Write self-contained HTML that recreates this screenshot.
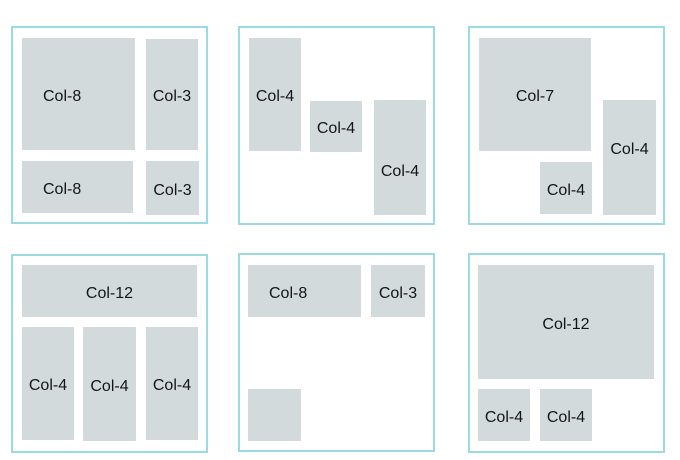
<!DOCTYPE html>
<html><head><style>
body{margin:0;width:680px;height:460px;background:#fff;position:relative;overflow:hidden;font-family:"Liberation Sans",sans-serif}
.p{position:absolute;border:2px solid #9adbe3;box-sizing:border-box}
.b{position:absolute;background:#d2dadc;display:flex;align-items:center;justify-content:center;font-size:16px;color:#151515;box-sizing:border-box;padding-top:5px}
.l{justify-content:flex-start;padding-left:21px}
</style></head><body>
<div class="p" style="left:11px;top:26px;width:197px;height:198px"></div>
<div class="b l" style="left:22px;top:38px;width:113px;height:112px">Col-8</div>
<div class="b" style="left:146px;top:39px;width:52px;height:111px">Col-3</div>
<div class="b l" style="left:22px;top:161px;width:111px;height:52px">Col-8</div>
<div class="b" style="left:146px;top:161px;width:53px;height:54px">Col-3</div>

<div class="p" style="left:238px;top:26px;width:197px;height:199px"></div>
<div class="b" style="left:249px;top:38px;width:52px;height:113px">Col-4</div>
<div class="b" style="left:310px;top:101px;width:52px;height:51px">Col-4</div>
<div class="b" style="left:374px;top:100px;width:52px;height:115px;padding-top:28px">Col-4</div>

<div class="p" style="left:468px;top:26px;width:197px;height:199px"></div>
<div class="b" style="left:479px;top:38px;width:112px;height:113px">Col-7</div>
<div class="b" style="left:603px;top:100px;width:53px;height:115px;padding-top:0;padding-bottom:16px">Col-4</div>
<div class="b" style="left:540px;top:162px;width:52px;height:52px">Col-4</div>

<div class="p" style="left:11px;top:254px;width:197px;height:199px"></div>
<div class="b" style="left:22px;top:265px;width:175px;height:52px">Col-12</div>
<div class="b" style="left:22px;top:327px;width:52px;height:113px">Col-4</div>
<div class="b" style="left:83px;top:327px;width:53px;height:114px">Col-4</div>
<div class="b" style="left:146px;top:327px;width:52px;height:113px">Col-4</div>

<div class="p" style="left:238px;top:253px;width:197px;height:199px"></div>
<div class="b l" style="left:248px;top:265px;width:113px;height:52px">Col-8</div>
<div class="b" style="left:371px;top:265px;width:54px;height:52px">Col-3</div>
<div class="b" style="left:248px;top:389px;width:53px;height:52px"></div>

<div class="p" style="left:468px;top:253px;width:197px;height:200px"></div>
<div class="b" style="left:478px;top:265px;width:176px;height:114px">Col-12</div>
<div class="b" style="left:478px;top:389px;width:52px;height:52px">Col-4</div>
<div class="b" style="left:540px;top:389px;width:52px;height:52px">Col-4</div>
</body></html>
